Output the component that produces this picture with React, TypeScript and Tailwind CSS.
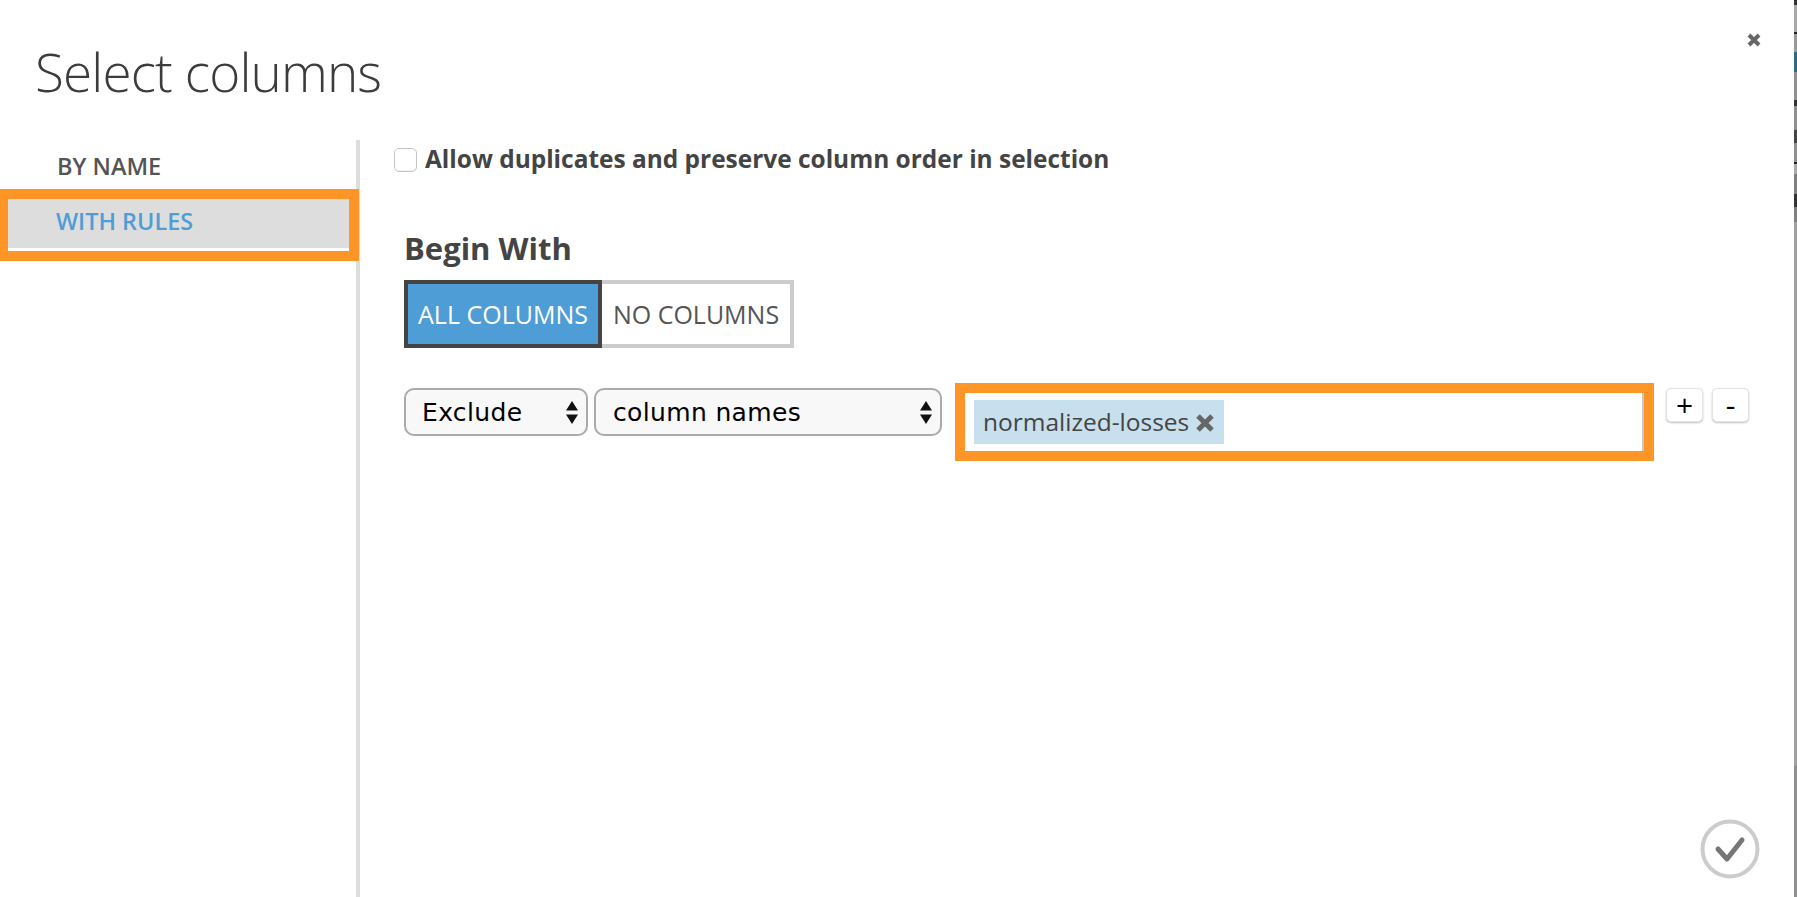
const Arrows = () => (
  <svg width="12" height="23" viewBox="0 0 12 23" className="shrink-0">
    <path d="M6 0 L12 9.5 L0 9.5 Z M6 23 L12 13.5 L0 13.5 Z" fill="#111" />
  </svg>
);

const FakeSelect = ({ label, className }: { label: string; className: string }) => (
  <div
    className={`flex h-[48px] items-center justify-between rounded-[10px] border-2 border-[#aaaaaa] bg-[#f8f8f8] font-['DejaVu_Sans',sans-serif] text-[25px] tracking-[0.35px] text-black ${className}`}
  >
    <span className="pt-[1px]">{label}</span>
    <Arrows />
  </div>
);

const SmallButton = ({ label }: { label: string }) => (
  <button className="flex h-[34px] w-[37px] items-center justify-center rounded-[5px] border border-[#e4e4e4] bg-white text-[30px] leading-none text-black shadow-[0_1px_2px_rgba(0,0,0,0.25)]">
    {label}
  </button>
);

export default function App() {
  return (
    <div className="flex h-[897px] w-[1797px] overflow-hidden bg-white font-['Open_Sans','Noto_Sans',sans-serif]">
      <div className="flex min-w-0 flex-1 flex-col">
        <header className="flex h-[140px] shrink-0 items-start justify-between pl-[35px] pr-[32px]">
          <h1 className="mt-[32px] text-[53px] font-light leading-[80px] tracking-[-0.85px] text-[#3c3c3c]">Select columns</h1>
          <button className="mt-[32px]">
            <svg width="16" height="16" viewBox="0 0 16 16" className="block">
              <path d="M3 3 L13 13 M13 3 L3 13" stroke="#666" strokeWidth="4" />
            </svg>
          </button>
        </header>

        <div className="flex min-h-0 flex-1">
          <aside className="w-[360px] shrink-0 border-r-4 border-[#dddddd]">
            <div className="flex h-[49px] items-center pl-[57px] pt-[5px] text-[23.5px] font-semibold text-[#555555]">
              BY NAME
            </div>
            <div className="w-[359px] border-y-[10px] border-l-[8px] border-r-[10px] border-[#fe9527] bg-white">
              <div className="flex h-[49px] items-center bg-[#dddddd] pb-[4px] pl-[48px] text-[23.4px] font-semibold text-[#4f9dd6]">
                WITH RULES
              </div>
              <div className="h-[3px]" />
            </div>
          </aside>

          <main className="flex min-w-0 flex-1 flex-col pl-[34px] pr-[37px]">
            <label className="mt-[7px] flex h-[24px] items-center gap-[8px] text-[24.45px] font-bold text-[#444444]">
              <span className="mt-[2px] h-[24px] w-[23px] shrink-0 rounded-[5px] border border-[#c4c4c4] bg-white shadow-[inset_0_-1px_1px_rgba(0,0,0,0.06)]" />
              Allow duplicates and preserve column order in selection
            </label>

            <div className="pl-[10px]">
              <h2 className="mt-[57px] h-[40px] text-[31px] font-bold leading-[40px] text-[#444444]">Begin With</h2>
              <div className="mt-[12px] flex h-[68px] text-[25px]">
                <div className="flex w-[198px] items-center justify-center border-4 border-[#444444] bg-[#4f9dd6] pt-[1px] text-white">
                  ALL COLUMNS
                </div>
                <div className="flex w-[192px] items-center justify-center border-y-4 border-r-4 border-[#cccccc] pt-[1px] text-[#555555]">
                  NO COLUMNS
                </div>
              </div>

              <div className="mt-[35px] flex items-start">
                <FakeSelect label="Exclude" className="mt-[5px] w-[184px] pl-[16px] pr-[8px]" />
                <FakeSelect label="column names" className="ml-[6px] mt-[5px] w-[348px] pl-[17px] pr-[8px]" />
                <div className="ml-[13px] w-[699px] border-[10px] border-[#fe9527]">
                  <div className="h-[58px] border-r-2 border-[#c8c8c8] bg-white pl-[9px] pt-[7px]">
                    <div className="flex h-[44px] w-[250px] items-center bg-[#c8e0ee] pl-[9px] pt-[1px] text-[24.5px] text-[#444444]">
                      normalized-losses
                      <svg width="20" height="20" viewBox="0 0 20 20" className="ml-[6px] shrink-0">
                        <path d="M3 3 L17 17 M17 3 L3 17" stroke="#666" strokeWidth="5" />
                      </svg>
                    </div>
                  </div>
                </div>
                <div className="ml-[12px] mt-[5px] flex gap-[9px]">
                  <SmallButton label="+" />
                  <SmallButton label="-" />
                </div>
              </div>
            </div>

            <div className="mt-auto flex justify-end pb-[18px]">
              <svg width="60" height="60" viewBox="0 0 60 60" className="-mr-[3px]">
                <circle cx="30" cy="30" r="27.5" fill="none" stroke="#cccccc" strokeWidth="4" />
                <path d="M18 30 L27 40 L42 21" fill="none" stroke="#777777" strokeWidth="5" strokeLinecap="round" strokeLinejoin="round" />
              </svg>
            </div>
          </main>
        </div>
      </div>

      {/* sliver of the page behind the dialog */}
      <div className="flex w-[3px] shrink-0 flex-col">
        <div className="h-[5px] bg-[#333333]" />
        <div className="h-[27px] bg-[#a8a8a8]" />
        <div className="h-[2px] bg-[#222222]" />
        <div className="h-[18px] bg-[#999999]" />
        <div className="h-[20px] bg-[#2a6a8a]" />
        <div className="h-[28px] bg-[#8f8f8f]" />
        <div className="h-[6px] bg-[#333333]" />
        <div className="h-[24px] bg-[#8f8f8f]" />
        <div className="h-[13px] bg-[#444444]" />
        <div className="h-[19px] bg-[#8f8f8f]" />
        <div className="h-[2px] bg-[#222222]" />
        <div className="h-[10px] bg-[#aaaaaa]" />
        <div className="h-[20px] bg-[#808080]" />
        <div className="h-[13px] bg-[#333333]" />
        <div className="h-[15px] bg-[#808080]" />
        <div className="h-[544px] bg-[#a0a0a0]" />
        <div className="flex-1 bg-[#909090]" />
      </div>
    </div>
  );
}
